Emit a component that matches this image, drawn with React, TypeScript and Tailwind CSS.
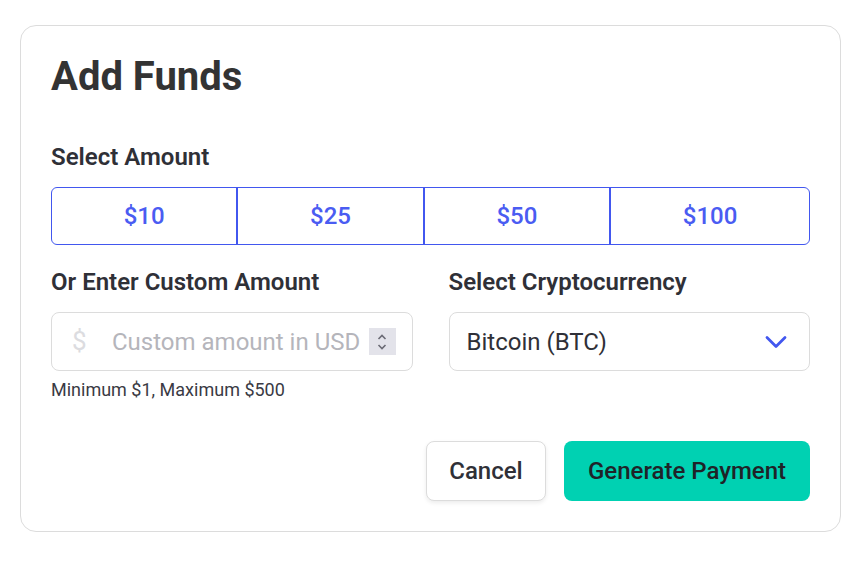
const amounts = ["$10", "$25", "$50", "$100"];

export default function App() {
  return (
    <div className="min-h-screen bg-white px-5 pt-[25px] font-['Roboto',sans-serif] text-[#363636]">
      <div className="rounded-2xl border border-[#dcdcdc] bg-white px-[30px] pt-[28px] pb-[30px]">
        <h1 className="text-[40px] leading-[45px] font-bold text-[#333]">Add Funds</h1>

        <p className="mt-[43px] text-[24px] leading-[30px] font-semibold text-[#2f3037]">Select Amount</p>
        <div className="mt-[15px] flex h-[58px] overflow-hidden rounded-md border border-[#4257ef]">
          {amounts.map((a, i) => (
            <button
              key={a}
              className={
                "flex-auto text-[24px] font-medium text-[#4a5cf2] " +
                (i > 0 ? "border-l-2 border-[#4257ef]" : "")
              }
            >
              {a}
            </button>
          ))}
        </div>

        <div className="mt-[22px] grid grid-cols-2 gap-9">
          <div>
            <p className="text-[24px] leading-[30px] font-semibold text-[#2f3037]">Or Enter Custom Amount</p>
            <div className="mt-[15px] flex h-[59px] items-center rounded-lg border border-[#dcdcdc] pl-[20px] pr-[16px]">
              <span className="w-[40px] text-[26px] text-[#dcdce0]">$</span>
              <span className="flex-1 text-[24px] text-[#b5b5bb]">Custom amount in USD</span>
              <span className="flex h-[27px] w-[27px] flex-col items-center justify-center bg-[#e3e3ea] text-[#6b6b75]">
                <svg width="10" height="18" viewBox="0 0 10 18" fill="none" stroke="currentColor" strokeWidth="1.6">
                  <path d="M1.5 6 L5 2.5 L8.5 6" />
                  <path d="M1.5 12 L5 15.5 L8.5 12" />
                </svg>
              </span>
            </div>
            <p className="mt-[7px] text-[18px] leading-[24px] text-[#3a3a44]">Minimum $1, Maximum $500</p>
          </div>
          <div>
            <p className="text-[24px] leading-[30px] font-semibold text-[#2f3037]">Select Cryptocurrency</p>
            <div className="mt-[15px] flex h-[59px] items-center justify-between rounded-lg border border-[#dcdcdc] pl-[17px] pr-[22px]">
              <span className="text-[24px] text-[#2f3037]">Bitcoin (BTC)</span>
              <svg width="22" height="14" viewBox="0 0 22 14" fill="none" stroke="#4257ef" strokeWidth="2.8" strokeLinecap="round" strokeLinejoin="round">
                <path d="M2 2.5 L11 11.5 L20 2.5" />
              </svg>
            </div>
          </div>
        </div>

        <div className="mt-[39px] flex justify-end gap-[18px]">
          <button className="h-[60px] w-[120px] rounded-lg border border-[#dcdcdc] bg-white text-[24px] font-medium text-[#2f3037] shadow-[0_2px_4px_rgba(0,0,0,0.08)]">
            Cancel
          </button>
          <button className="h-[60px] w-[246px] rounded-lg bg-[#00d1b2] text-[24px] font-medium text-[#1f2328]">
            Generate Payment
          </button>
        </div>
      </div>
    </div>
  );
}
